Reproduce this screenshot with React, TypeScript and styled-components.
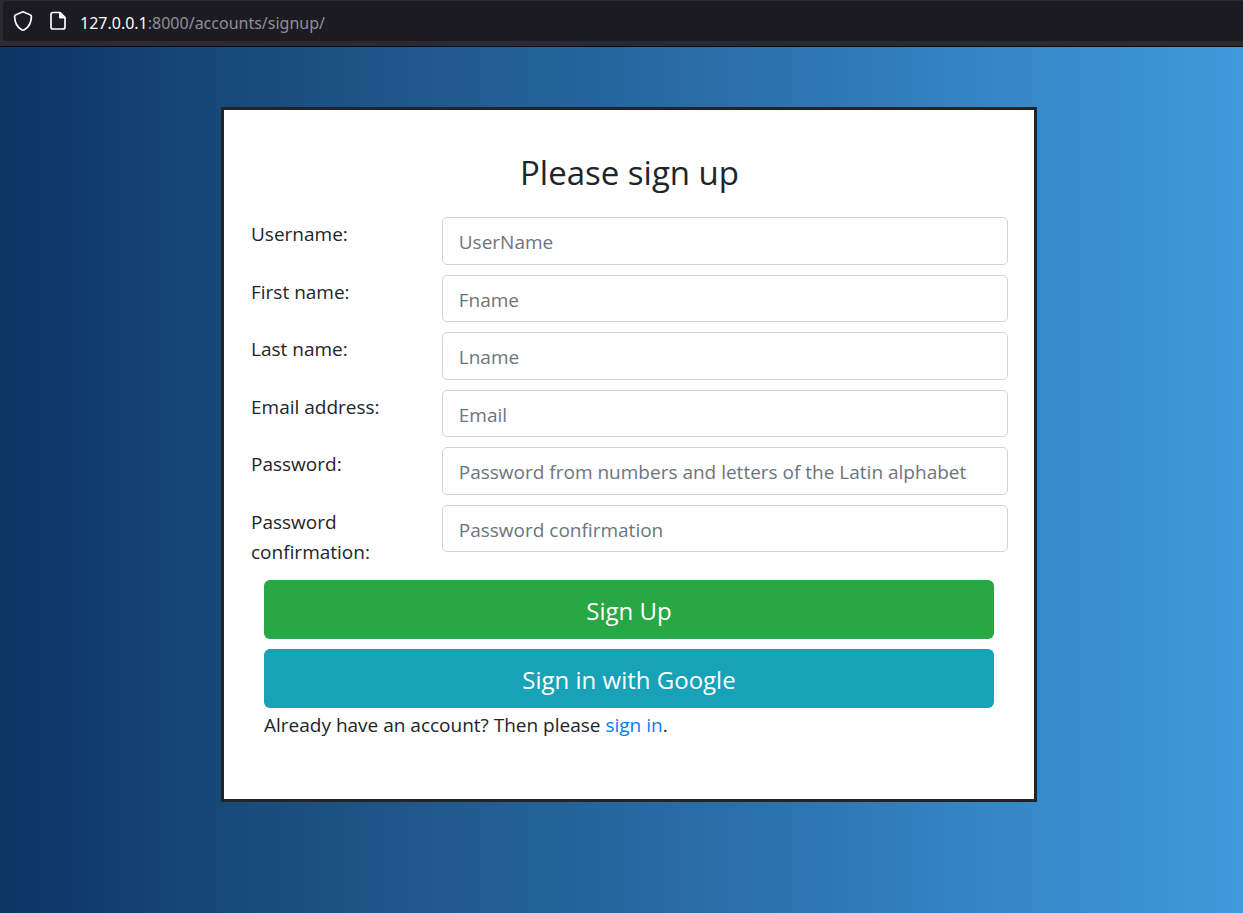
import React from "react";
import styled, { createGlobalStyle } from "styled-components";

const GlobalStyle = createGlobalStyle`
  *, *::before, *::after { box-sizing: border-box; }
  html, body, #root { min-height: 100vh; }
  body {
    margin: 0;
    color: #212529;
    font-family: "Segoe UI", "Open Sans", "Noto Sans", sans-serif;
    font-size: 19px;
    line-height: 30px;
  }
`;

const Page = styled.div`
  display: flex;
  flex-direction: column;
  min-height: 100vh;
`;

const BrowserBar = styled.header`
  flex: none;
  padding: 1px 0 5px 3px;
  background: #2b2a33;
  border-bottom: 1px solid #0c0c0d;
`;

const AddressBar = styled.div`
  display: flex;
  align-items: center;
  height: 40px;
  padding-left: 9px;
  background: #1c1b22;
  border-radius: 4px 0 0 4px;
`;

const BarIcon = styled.svg`
  flex: none;
  width: 22px;
  height: 22px;
  margin-right: 12px;
`;

const Address = styled.span`
  padding-top: 4px;
  color: #8f8f96;
  font-family: "Segoe UI", "Noto Sans", sans-serif;
  font-size: 16px;
  line-height: 24px;
`;

const Host = styled.span`
  color: #fbfbfe;
`;

const Backdrop = styled.main`
  flex: 1;
  padding: 60px 206px 60px 221px;
  background: linear-gradient(
    to right,
    #0c3663 0%,
    #103a6c 6%,
    #184a7a 19%,
    #1f5589 31%,
    #236299 45%,
    #2c72b0 62%,
    #3586c6 80%,
    #4099db 100%
  );
`;

const Card = styled.form`
  padding: 41px 26px 59px 27px;
  background: #fff;
  border: 3px solid #212529;
`;

const Title = styled.h1`
  margin: 0 0 22px;
  font-size: 33px;
  font-weight: 400;
  line-height: 44px;
  text-align: center;
`;

const Fields = styled.div`
  display: grid;
  gap: 10px;
`;

const TextInput = styled.input`
  width: 100%;
  height: 48px;
  padding: 2px 16px 0;
  color: #495057;
  font: inherit;
  background: #fff;
  border: 1px solid #ced4da;
  border-radius: 5px;

  &::placeholder {
    color: #6c757d;
    opacity: 1;
  }
`;

const FieldRow = styled.div`
  display: grid;
  grid-template-columns: 1fr 3fr;
  column-gap: 2px;
  align-items: start;

  &:nth-child(even) ${TextInput} {
    height: 47px;
  }
`;

const FieldLabel = styled.label`
  padding: 2px 40px 0 0;
`;

const Actions = styled.div`
  display: grid;
  gap: 10px;
  padding: 13px 14px 0 13px;
`;

const ActionButton = styled.button<{ $tone: string }>`
  height: 59px;
  padding: 2px 20px 0;
  color: #fff;
  font: inherit;
  font-size: 24px;
  background: ${(p) => p.$tone};
  border: 0;
  border-radius: 6px;
  cursor: pointer;
`;

const Note = styled.p`
  margin: 0;
  padding: 2px 0 0 13px;
`;

const SignInLink = styled.a`
  color: #007bff;
  text-decoration: none;
`;

const fields = [
  { id: "username", label: "Username:", placeholder: "UserName", type: "text" },
  { id: "first-name", label: "First name:", placeholder: "Fname", type: "text" },
  { id: "last-name", label: "Last name:", placeholder: "Lname", type: "text" },
  { id: "email", label: "Email address:", placeholder: "Email", type: "email" },
  {
    id: "password",
    label: "Password:",
    placeholder: "Password from numbers and letters of the Latin alphabet",
    type: "password",
  },
  {
    id: "password-confirmation",
    label: "Password confirmation:",
    placeholder: "Password confirmation",
    type: "password",
  },
];

export default function App() {
  return (
    <Page>
      <GlobalStyle />
      <BrowserBar>
        <AddressBar>
          <BarIcon viewBox="0 0 22 22" fill="none" stroke="#fbfbfe" strokeWidth="1.7" strokeLinejoin="round" aria-hidden="true">
            <path d="M11 1.8 18 4.7c1 .4 1.5.9 1.4 1.9-.2 5.8-2.7 10.7-7.1 13.2-.9.5-1.7.5-2.6 0C5.3 17.3 2.8 12.4 2.6 6.6c-.1-1 .4-1.500 1.400-1.900Z" />
          </BarIcon>
          <BarIcon viewBox="0 0 22 22" fill="none" stroke="#fbfbfe" strokeWidth="1.7" strokeLinejoin="round" aria-hidden="true">
            <path d="M7 2.500h7l5 5v9.500a2 2 0 0 1-2 2H7a2 2 0 0 1-2-2V4.500a2 2 0 0 1 2-2Z" />
            <path d="M13 2v5.500a1 1 0 0 0 1 1h5.500V7l-5-5Z" fill="#fbfbfe" stroke="none" />
          </BarIcon>
          <Address>
            <Host>127.0.0.1</Host>:8000/accounts/signup/
          </Address>
        </AddressBar>
      </BrowserBar>
      <Backdrop>
        <Card onSubmit={(e) => e.preventDefault()}>
          <Title>Please sign up</Title>
          <Fields>
            {fields.map((f) => (
              <FieldRow key={f.id}>
                <FieldLabel htmlFor={f.id}>{f.label}</FieldLabel>
                <TextInput id={f.id} name={f.id} type={f.type} placeholder={f.placeholder} />
              </FieldRow>
            ))}
          </Fields>
          <Actions>
            <ActionButton type="submit" $tone="#28a745">Sign Up</ActionButton>
            <ActionButton type="button" $tone="#17a2b8">Sign in with Google</ActionButton>
          </Actions>
          <Note>
            Already have an account? Then please <SignInLink href="#signin">sign in</SignInLink>.
          </Note>
        </Card>
      </Backdrop>
    </Page>
  );
}
